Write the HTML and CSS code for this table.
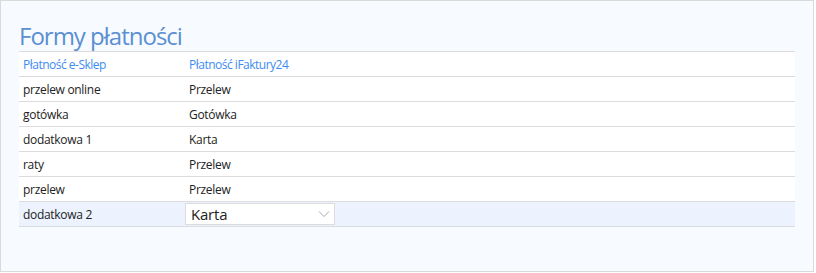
FILE: index.html
```html
<!DOCTYPE html>
<html lang="pl">
<head>
    <meta charset="UTF-8">
    <title>Formy płatności</title>
    <link rel="stylesheet" href="styles.css">
</head>
<body>
    <div class="panel">
        <h2 class="panel-title">Formy płatności</h2>
        <table class="payments">
            <thead>
                <tr>
                    <th class="col-shop">Płatność e-Sklep</th>
                    <th>Płatność iFaktury24</th>
                </tr>
            </thead>
            <tbody>
                <tr><td>przelew online</td><td>Przelew</td></tr>
                <tr><td>gotówka</td><td>Gotówka</td></tr>
                <tr><td>dodatkowa 1</td><td>Karta</td></tr>
                <tr><td>raty</td><td>Przelew</td></tr>
                <tr><td>przelew</td><td>Przelew</td></tr>
                <tr class="active">
                    <td>dodatkowa 2</td>
                    <td class="cell-select">
                        <div class="select">
                            <span>Karta</span>
                            <svg width="12" height="8" viewBox="0 0 12 8"><path d="M1 1.5l5 5 5-5" fill="none" stroke="#a8a8a8" stroke-width="1"/></svg>
                        </div>
                    </td>
                </tr>
            </tbody>
        </table>
    </div>
</body>
</html>
```

FILE: styles.css
```css
body {
    margin: 0;
    font-family: "Open Sans", "Noto Sans", sans-serif;
    background: #fff;
}
.panel {
    width: 814px;
    height: 272px;
    border: 1px solid #dadada;
    background: #f7fbff;
    padding: 0 18px;
    box-sizing: border-box;
}
.panel-title {
    margin: 0;
    padding-top: 20px;
    height: 30px;
    font-size: 24px;
    font-weight: normal;
    color: #5b8fd1;
    line-height: 30px;
    letter-spacing: -1px;
}
.payments {
    width: 776px;
    border-collapse: collapse;
    background: #fff;
    font-size: 12px;
    letter-spacing: -0.3px;
    color: #222;
}
.payments th, .payments td {
    height: 24px;
    padding: 0 4px;
    text-align: left;
    border-top: 1px solid #dcdcdc;
    border-bottom: 1px solid #dcdcdc;
}
.payments th {
    font-weight: normal;
    color: #3e8cf2;
    font-size: 12px;
    letter-spacing: -0.5px;
}
.col-shop {
    width: 158px;
}
.payments tr.active td {
    background: #ecf3fe;
}
.payments td.cell-select {
    padding: 0;
}
.select {
    width: 150px;
    height: 22px;
    border: 1px solid #dcdcdc;
    background: #fff;
    display: flex;
    align-items: center;
    justify-content: space-between;
    padding: 0 4px 0 5px;
    font-size: 15px;
    letter-spacing: -0.2px;
    color: #222;
    box-sizing: border-box;
}
```
